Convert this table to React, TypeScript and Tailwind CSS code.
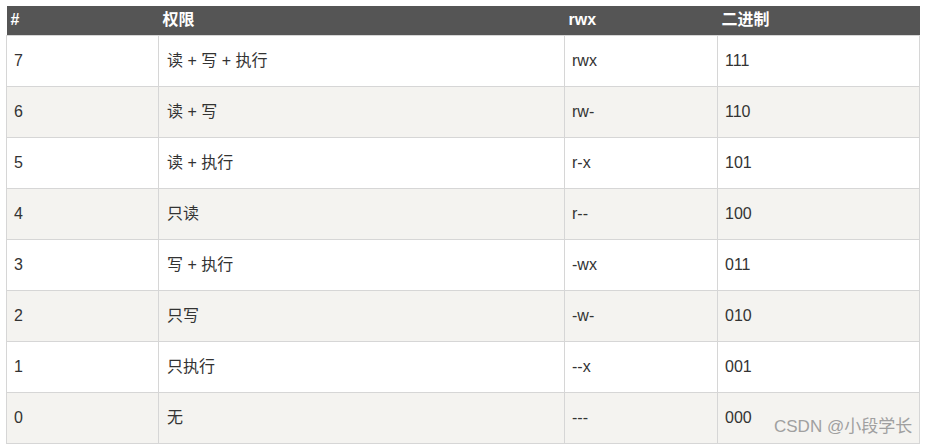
import React from "react";

const rows = [
  { n: "7", perm: "读 + 写 + 执行", rwx: "rwx", bin: "111" },
  { n: "6", perm: "读 + 写", rwx: "rw-", bin: "110" },
  { n: "5", perm: "读 + 执行", rwx: "r-x", bin: "101" },
  { n: "4", perm: "只读", rwx: "r--", bin: "100" },
  { n: "3", perm: "写 + 执行", rwx: "-wx", bin: "011" },
  { n: "2", perm: "只写", rwx: "-w-", bin: "010" },
  { n: "1", perm: "只执行", rwx: "--x", bin: "001" },
  { n: "0", perm: "无", rwx: "---", bin: "000" },
];

const App = () => {
  return (
    <div
      className="relative w-[926px] h-[448px] bg-white pt-[6px] pl-[6px]"
      style={{ fontFamily: '"Liberation Sans", "Noto Sans CJK SC", sans-serif' }}
    >
      <table className="table-fixed border-collapse w-[913px] text-[16px] text-[#333]">
        <colgroup>
          <col className="w-[152px]" />
          <col className="w-[406px]" />
          <col className="w-[153px]" />
          <col className="w-[202px]" />
        </colgroup>
        <thead>
          <tr className="h-[29px] bg-[#555555] text-white font-bold text-left">
            <th className="px-[4px] py-0">#</th>
            <th className="px-[4px] py-0">权限</th>
            <th className="px-[4px] py-0">rwx</th>
            <th className="px-[4px] py-0">二进制</th>
          </tr>
        </thead>
        <tbody>
          {rows.map((r, i) => (
            <tr key={i} className={`h-[51px] ${i % 2 === 1 ? "bg-[#f4f3f0]" : "bg-white"}`}>
              <td className="border border-[#d6d6d6] px-[7px]">{r.n}</td>
              <td className="border border-[#d6d6d6] px-[8px]">{r.perm}</td>
              <td className="border border-[#d6d6d6] px-[7px]">{r.rwx}</td>
              <td className="border border-[#d6d6d6] px-[7px]">{r.bin}</td>
            </tr>
          ))}
        </tbody>
      </table>
      <div className="absolute left-[774px] top-[418px] text-[17px] text-[#a0a0a0] leading-none">
        CSDN @小段学长
      </div>
    </div>
  );
};

export default App;
